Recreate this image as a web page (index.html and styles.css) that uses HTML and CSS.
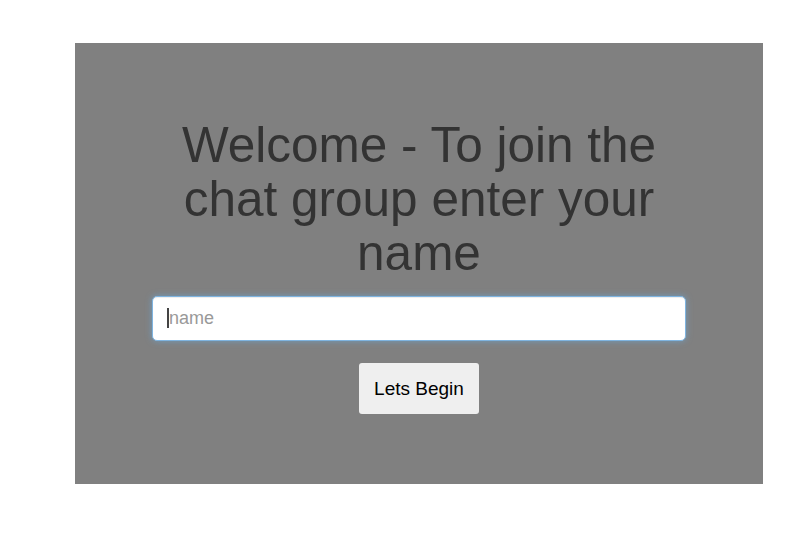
FILE: index.html
```html
<!DOCTYPE html>
<html lang="en">
<head>
<meta charset="utf-8">
<title>Welcome</title>
<link rel="stylesheet" href="styles.css">
</head>
<body>
<div class="panel">
  <div class="inner">
    <h1 class="title">Welcome - To join the chat group enter your name</h1>
    <div class="field">
      <input class="name-input" type="text" placeholder="name">
      <span class="caret"></span>
    </div>
    <button class="begin" type="button">Lets Begin</button>
  </div>
</div>
</body>
</html>
```

FILE: styles.css
```css
html, body {
  margin: 0;
  padding: 0;
  background: #ffffff;
}
body {
  font-family: "Liberation Sans", Arial, sans-serif;
}
.panel {
  margin: 43px 0 0 75px;
  width: 688px;
  height: 441px;
  background: #808080;
  box-sizing: border-box;
  padding-top: 75px;
  display: flex;
  justify-content: center;
}
.inner {
  width: 534px;
  display: flex;
  flex-direction: column;
  align-items: center;
}
.title {
  margin: 0;
  font-weight: normal;
  font-size: 49.5px;
  line-height: 54px;
  color: #333333;
  text-align: center;
  width: 100%;
}
.field {
  position: relative;
  margin-top: 16px;
  width: 100%;
}
.name-input {
  display: block;
  box-sizing: border-box;
  width: 100%;
  height: 45px;
  padding: 0 16px;
  font-family: "Liberation Sans", Arial, sans-serif;
  font-size: 18px;
  color: #555555;
  background: #ffffff;
  border: 1px solid #7fb4e0;
  border-radius: 5px;
  outline: none;
  box-shadow: inset 0 1px 1px rgba(0,0,0,0.075), 0 0 6px rgba(102,175,233,0.6);
}
.name-input::placeholder {
  color: #999999;
}
.caret {
  position: absolute;
  left: 15px;
  top: 12px;
  width: 2px;
  height: 20px;
  background: #444444;
}
.begin {
  margin-top: 22px;
  width: 120px;
  height: 51px;
  background: #efefef;
  border: none;
  border-radius: 3px;
  font-family: "Liberation Sans", Arial, sans-serif;
  font-size: 19px;
  color: #000000;
  padding: 0;
}
```
